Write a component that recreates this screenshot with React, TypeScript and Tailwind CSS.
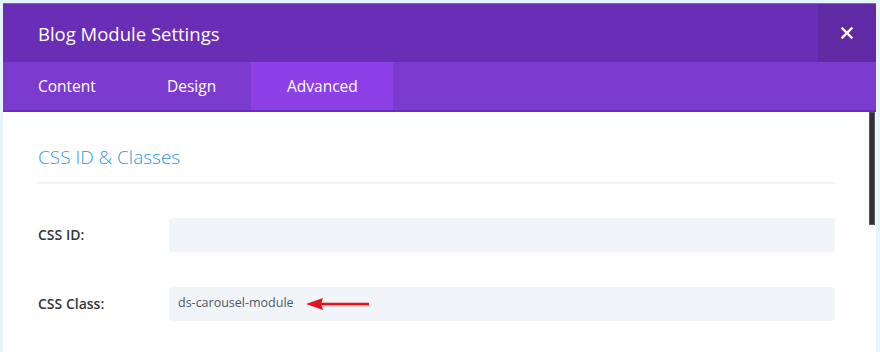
import React from "react";

export default function App() {
  return (
    <div className="w-[880px] h-[352px] bg-[#e6f4fc] pt-[3px] pl-[3px] pr-[4px] overflow-hidden" style={{ fontFamily: '"Open Sans", sans-serif' }}>
      <div className="w-full h-[349px] flex flex-col bg-white">
        <div className="h-[59px] bg-[#6a2db5] border-t border-[#8a5bd0] flex items-stretch">
          <div className="flex-1 flex items-center pl-[35px] pt-[1px] text-white text-[18.5px] font-normal">Blog Module Settings</div>
          <div className="w-[58px] bg-[#5f2aa4] flex items-center justify-center">
            <svg width="12" height="12" viewBox="0 0 12 12">
              <path d="M1.5 1.5 L10.5 10.5 M10.5 1.5 L1.5 10.5" stroke="white" strokeWidth="2.4" strokeLinecap="square" />
            </svg>
          </div>
        </div>
        <div className="h-[50px] bg-[#7c3bce] border-b-2 border-[#6a2cc0] flex text-white text-[15.5px] font-normal">
          <div className="w-[125px] flex items-center pl-[35px] pt-[2px]">Content</div>
          <div className="w-[123px] flex items-center pl-[39px] pt-[2px]">Design</div>
          <div className="w-[142px] bg-[#8d40e7] flex items-center pl-[36px] pt-[2px]">Advanced</div>
        </div>
        <div className="flex-1 flex">
          <div className="flex-1 pl-[35px] pr-[34px]">
            <div className="pt-[31px] pb-[10px] text-[19px] font-light text-[#2e9ae0] border-b-2 border-[#edf3f8]">CSS ID &amp; Classes</div>
            <div className="mt-[34px] flex items-center h-[34px]">
              <div className="w-[131px] text-[14px] font-semibold text-[#32373c]">CSS ID:</div>
              <div className="flex-1 h-[34px] bg-[#f1f5f9] rounded-[3px]" />
            </div>
            <div className="mt-[35px] flex items-center h-[34px]">
              <div className="w-[131px] text-[14px] font-semibold text-[#32373c]">CSS Class:</div>
              <div className="flex-1 h-[34px] bg-[#f1f5f9] rounded-[3px] flex items-center pl-[9px] text-[12.5px] text-[#4c5866]">
                <span>ds-carousel-module</span>
                <svg width="70" height="16" viewBox="0 0 70 16" className="ml-[11px]">
                  <path d="M17 10 L65 10" stroke="#bdbdbd" strokeWidth="1.5" opacity="0.7" />
                  <path d="M15 6.8 L64 6.8 L64 9.2 L15 9.2 Z" fill="#e0141a" />
                  <path d="M1 8 L18 2 L16 8 L18 14 Z" fill="#e0141a" />
                </svg>
              </div>
            </div>
          </div>
          <div className="w-[7px] flex flex-col">
            <div className="h-[113px] w-[6px] bg-[#2f3338] border border-[#555]" />
          </div>
        </div>
      </div>
    </div>
  );
}
